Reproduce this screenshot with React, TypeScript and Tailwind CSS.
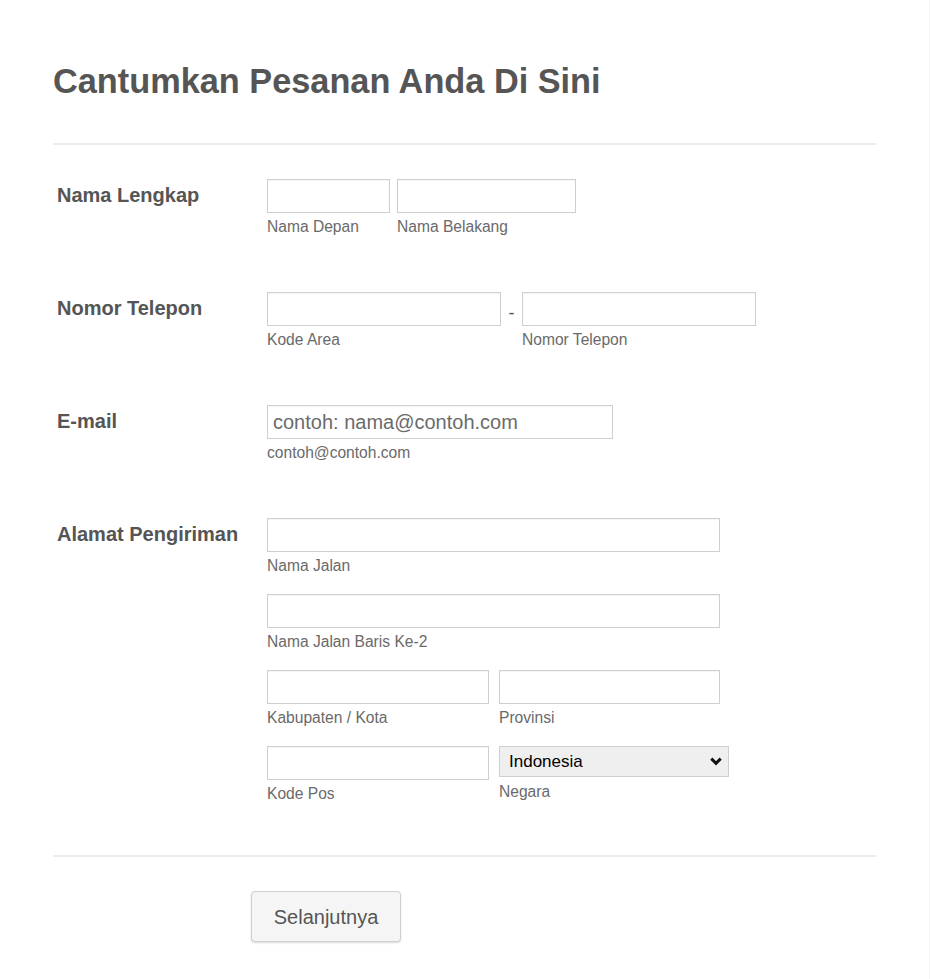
import React from 'react'

const inputCls = 'block h-[34px] border border-[#cfcfcf] bg-white px-[5px] text-[20px] text-[#555] outline-none shadow-[inset_0_1px_1px_rgba(0,0,0,0.04)] placeholder:text-[#6b6b6b]'

const Sub = ({ children }: { children: React.ReactNode }) => (
  <div className="mt-[5px] text-[15.6px] leading-[18px] text-[#6a6a6a]">{children}</div>
)

const Field = ({ width, sub, placeholder }: { width: string; sub: string; placeholder?: string }) => (
  <div>
    <input className={`${inputCls} ${width}`} placeholder={placeholder} />
    <Sub>{sub}</Sub>
  </div>
)

const Row = ({ label, children, last }: { label: string; children: React.ReactNode; last?: boolean }) => (
  <div className={`flex ${last ? 'pb-[52px]' : 'pb-[56px]'}`}>
    <div className="w-[214px] shrink-0 pl-[4px] pt-[4px] text-[20px] font-bold leading-[24px] text-[#555]">
      {label}
    </div>
    <div>{children}</div>
  </div>
)

export default function App() {
  return (
    <div className="min-h-screen border-r border-[#f2f2f2] bg-white font-['Liberation_Sans',Arial,sans-serif]">
      <div className="ml-[53px] w-[823px] pt-[61px] pb-[36px]">
        <h1 className="text-[34.3px] font-bold leading-[40px] text-[#555]">Cantumkan Pesanan Anda Di Sini</h1>
        <div className="mt-[42px] h-[2px] bg-[#ececec]" />

        <div className="pt-[34px]">
          <Row label="Nama Lengkap">
            <div className="flex gap-[7px]">
              <Field width="w-[123px]" sub="Nama Depan" />
              <Field width="w-[179px]" sub="Nama Belakang" />
            </div>
          </Row>

          <Row label="Nomor Telepon">
            <div className="flex">
              <Field width="w-[234px]" sub="Kode Area" />
              <div className="w-[21px] pt-[11px] text-center text-[18px] leading-[20px] text-[#555]">-</div>
              <Field width="w-[234px]" sub="Nomor Telepon" />
            </div>
          </Row>

          <Row label="E-mail">
            <Field width="w-[346px]" sub="contoh@contoh.com" placeholder="contoh: nama@contoh.com" />
          </Row>

          <Row label="Alamat Pengiriman" last>
            <div className="flex flex-col gap-[19px]">
              <Field width="w-[453px]" sub="Nama Jalan" />
              <Field width="w-[453px]" sub="Nama Jalan Baris Ke-2" />
              <div className="flex gap-[10px]">
                <Field width="w-[222px]" sub="Kabupaten / Kota" />
                <Field width="w-[221px]" sub="Provinsi" />
              </div>
              <div className="flex gap-[10px]">
                <Field width="w-[222px]" sub="Kode Pos" />
                <div>
                  <div className="relative w-[230px]">
                    <select
                      defaultValue="Indonesia"
                      className="block h-[31px] w-full appearance-none border border-[#cfcfcf] bg-[#efefef] pl-[9px] text-[17px] text-black outline-none"
                    >
                      <option>Indonesia</option>
                    </select>
                    <svg
                      className="pointer-events-none absolute right-[7px] top-[11px]"
                      width="12"
                      height="9"
                      viewBox="0 0 12 9"
                    >
                      <path d="M1.3 1.6 L6 6.3 L10.7 1.6" fill="none" stroke="#111" strokeWidth="3" />
                    </svg>
                  </div>
                  <div className="mt-[6px] text-[15.6px] leading-[18px] text-[#6a6a6a]">Negara</div>
                </div>
              </div>
            </div>
          </Row>
        </div>

        <div className="h-[2px] bg-[#ececec]" />

        <div className="pl-[198px] pt-[34px]">
          <button className="h-[51px] w-[150px] rounded-[4px] border border-[#cfcfcf] bg-[#f5f5f5] text-[20px] text-[#555] shadow-[0_1px_2px_rgba(0,0,0,0.15)]">
            Selanjutnya
          </button>
        </div>
      </div>
    </div>
  )
}
